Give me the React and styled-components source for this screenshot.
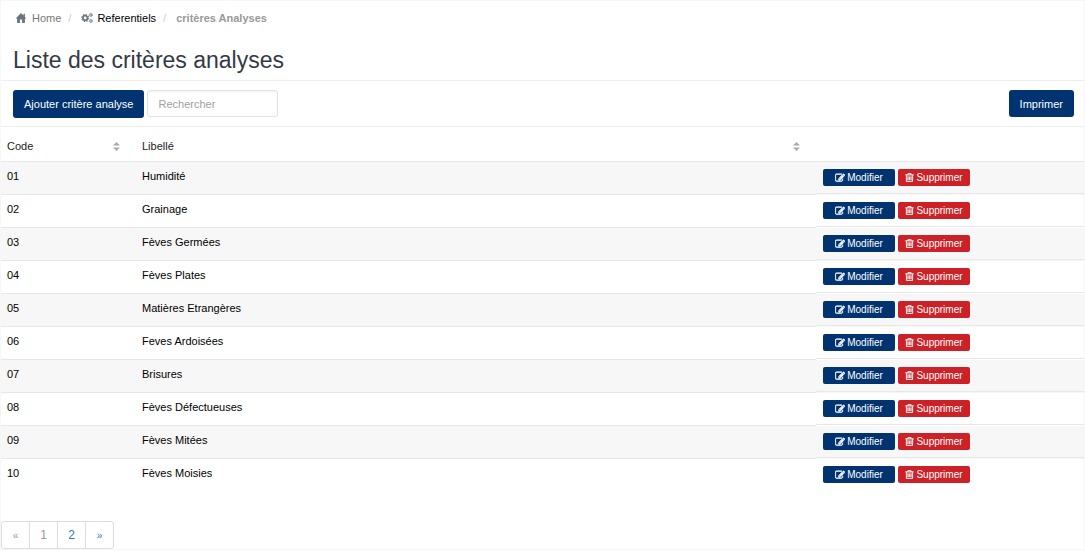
import React, { useState } from 'react';
import styled, { createGlobalStyle } from 'styled-components';

const GlobalStyle = createGlobalStyle`
  * {
    box-sizing: border-box;
  }

  body {
    margin: 0;
    background: white;
    color: #000;
    font-family: "Liberation Sans", Arial, Helvetica, sans-serif;
    font-size: 11px;
    line-height: 16px;
  }

  button, input {
    font-family: inherit;
  }
`;

const Page = styled.main`
  border: 1px solid #f7f7f7;
`;

const Breadcrumb = styled.ol`
  display: flex;
  align-items: center;
  list-style: none;
  margin: 0;
  padding: 9px 14px;
`;

const Crumb = styled.li`
  display: flex;
  align-items: center;
  color: #999;
  font-weight: ${props => (props.$current ? 700 : 400)};

  li + &::before {
    content: '/';
    color: #ccc;
    font-weight: 400;
    padding: 0 10px 0 7px;
  }
`;

const CrumbLink = styled.a`
  display: flex;
  align-items: center;
  gap: ${props => props.$gap || '4px'};
  color: ${props => props.$color || '#000'};
  text-decoration: none;

  svg {
    color: #68747f;
  }
`;

const Title = styled.h1`
  margin: 0;
  padding: 9px 12px 4px;
  color: #333a45;
  font-size: 23px;
  font-weight: 400;
  line-height: 32px;
`;

const Toolbar = styled.div`
  display: flex;
  align-items: flex-start;
  justify-content: space-between;
  padding: 9px 10px 8px 12px;
  border-top: 1px solid #eee;
  border-bottom: 1px solid #eee;
`;

const ToolbarGroup = styled.div`
  display: flex;
  gap: 3px;
`;

const Button = styled.button`
  height: ${props => (props.$compact ? '27px' : '28px')};
  padding: 0 11px;
  border: 0;
  border-radius: 3px;
  background: #00336f;
  color: white;
  font-size: 11px;
  cursor: pointer;
`;

const SearchInput = styled.input`
  width: 131px;
  height: 27px;
  padding: 0 10px;
  border: 1px solid #e2e2e4;
  border-radius: 3px;
  background: white;
  color: #333;
  font-size: 11px;
  box-shadow: inset 0 1px 1px rgba(0, 0, 0, 0.05);

  &::placeholder {
    color: #a0a0a0;
  }
`;

const Table = styled.table`
  width: 100%;
  table-layout: fixed;
  border-collapse: separate;
  border-spacing: 0;
`;

const HeadCell = styled.th`
  width: ${props => props.$width || 'auto'};
  height: 35px;
  padding: 4px 16px 0 6px;
  border-bottom: 1px solid #e7e7e7;
  color: #222;
  font-weight: 400;
  text-align: left;
`;

const SortButton = styled.button`
  display: flex;
  align-items: center;
  justify-content: space-between;
  width: 100%;
  padding: 0;
  border: 0;
  background: none;
  color: inherit;
  font-size: 11px;
  line-height: 16px;
  cursor: pointer;

  svg {
    color: #aaa;
  }
`;

const Row = styled.tr`
  background: ${props => (props.$striped ? '#f7f7f7' : 'white')};
`;

const Cell = styled.td`
  height: 33px;
  padding: 6px 6px 10px;
  border-bottom: 1px solid ${props => (props.$last ? 'transparent' : '#e7e7e7')};
  vertical-align: top;
`;

const ActionCell = styled.td`
  padding: 0;
  vertical-align: top;
`;

const Actions = styled.div`
  display: flex;
  gap: 3px;
  height: 32px;
  padding: 7px;
  border-bottom: 1px solid ${props => (props.$last ? 'transparent' : '#e7e7e7')};
`;

const RowButton = styled.button`
  display: flex;
  align-items: center;
  justify-content: center;
  gap: 2px;
  width: 72px;
  height: 17px;
  padding: 0;
  border: 0;
  border-radius: 2px;
  background: ${props => (props.$danger ? '#cc2127' : '#00336f')};
  color: white;
  font-size: 10px;
  cursor: pointer;
`;

const Pagination = styled.nav`
  display: flex;
  padding: 29px 0 0;
`;

const PageLink = styled.a`
  width: 29px;
  height: 28px;
  margin-right: -1px;
  border: 1px solid #ddd;
  color: ${props => (props.$muted ? '#999' : '#337ab7')};
  font-size: ${props => (props.$arrow ? '10px' : '12px')};
  line-height: 27px;
  text-align: center;
  text-decoration: none;

  &:first-child {
    border-radius: 3px 0 0 3px;
  }

  &:last-child {
    border-radius: 0 3px 3px 0;
  }
`;

const HomeIcon = () => (
  <svg width="12" height="12" viewBox="0 0 12 12" fill="currentColor" aria-hidden="true">
    <path d="M6 1 0.6 6.6h1.5V11h2.8V7.6h2.2V11h2.8V6.600h1.5L9.9 4.9V1.8H8.5v1.700z" />
  </svg>
);

// one large gear with two small ones on its right
const CogsIcon = () => (
  <svg width="12" height="12" viewBox="0 0 12 12" fill="none" stroke="currentColor" aria-hidden="true">
    <circle cx="4.2" cy="6" r="2.300" strokeWidth="1.700" />
    <circle cx="4.2" cy="6" r="3.500" strokeWidth="1.100" strokeDasharray="1.370 1.370" />
    <circle cx="9.900" cy="3" r="1.150" strokeWidth="0.900" />
    <circle cx="9.900" cy="3" r="1.800" strokeWidth="0.600" strokeDasharray="0.940 0.940" />
    <circle cx="9.900" cy="9" r="1.150" strokeWidth="0.900" />
    <circle cx="9.900" cy="9" r="1.800" strokeWidth="0.600" strokeDasharray="0.940 0.940" />
  </svg>
);

const EditIcon = () => (
  <svg width="10" height="10" viewBox="0 0 1792 1792" fill="currentColor" stroke="currentColor" strokeWidth="90" aria-hidden="true">
    <path d="M888 1184l116-116-152-152-116 116v56h96v96h56zm440-720q-16-16-33 1l-350 350q-17 17-1 33t33-1l350-350q17-17 1-33zm80 594v190q0 119-84.500 203.500t-203.500 84.500h-832q-119 0-203.500-84.500t-84.500-203.500v-832q0-119 84.500-203.500t203.500-84.500h832q63 0 117 25 15 7 18 23 3 17-9 29l-49 49q-14 14-32 8-23-6-45-6h-832q-66 0-113 47t-47 113v832q0 66 47 113t113 47h832q66 0 113-47t47-113v-126q0-13 9-22l64-64q15-15 35-7t20 29zm-96-738l288 288-672 672h-288v-288zm444 132l-92 92-288-288 92-92q28-28 68-28t68 28l152 152q28 28 28 68t-28 68z" />
  </svg>
);

const TrashIcon = () => (
  <svg width="9" height="9" viewBox="192 128 1408 1536" fill="currentColor" stroke="currentColor" strokeWidth="50" aria-hidden="true">
    <path d="M704 736v576q0 14-9 23t-23 9h-64q-14 0-23-9t-9-23v-576q0-14 9-23t23-9h64q14 0 23 9t9 23zm256 0v576q0 14-9 23t-23 9h-64q-14 0-23-9t-9-23v-576q0-14 9-23t23-9h64q14 0 23 9t9 23zm256 0v576q0 14-9 23t-23 9h-64q-14 0-23-9t-9-23v-576q0-14 9-23t23-9h64q14 0 23 9t9 23zm128 724v-948h-896v948q0 22 7 40.500t14.500 27 10.500 8.500h832q3 0 10.500-8.500t14.500-27 7-40.500zm-672-1076h448l-48-117q-7-9-17-11h-317q-10 2-17 11zm928 32v64q0 14-9 23t-23 9h-96v948q0 83-47 143.500t-113 60.500h-832q-66 0-113-58.500t-47-141.500v-952h-96q-14 0-23-9t-9-23v-64q0-14 9-23t23-9h309l70-167q15-37 54-63t79-26h320q40 0 79 26t54 63l70 167h309q14 0 23 9t9 23z" />
  </svg>
);

const SortIcon = () => (
  <svg width="7" height="10" viewBox="0 0 7 10" fill="currentColor" aria-hidden="true">
    <path d="M3.500 1l3.500 3.500h-7zM3.500 10l3.500-3.500h-7z" />
  </svg>
);

const criteres = [
  { code: '01', libelle: 'Humidité' },
  { code: '02', libelle: 'Grainage' },
  { code: '03', libelle: 'Fèves Germées' },
  { code: '04', libelle: 'Fèves Plates' },
  { code: '05', libelle: 'Matières Etrangères' },
  { code: '06', libelle: 'Feves Ardoisées' },
  { code: '07', libelle: 'Brisures' },
  { code: '08', libelle: 'Fèves Défectueuses' },
  { code: '09', libelle: 'Fèves Mitées' },
  { code: '10', libelle: 'Fèves Moisies' },
];

const App = () => {
  const [search, setSearch] = useState('');
  const [sort, setSort] = useState({ key: 'code', asc: true });

  const toggleSort = (key) => {
    setSort(prev => ({ key, asc: prev.key === key ? !prev.asc : true }));
  };

  const rows = criteres
    .filter(item => item.libelle.toLowerCase().includes(search.toLowerCase()))
    .sort((a, b) => a[sort.key].localeCompare(b[sort.key]) * (sort.asc ? 1 : -1));

  return (
    <>
      <GlobalStyle />
      <Page>
        <Breadcrumb>
          <Crumb>
            <CrumbLink href="#" $color="#777" $gap="5px"><HomeIcon />Home</CrumbLink>
          </Crumb>
          <Crumb>
            <CrumbLink href="#"><CogsIcon />Referentiels</CrumbLink>
          </Crumb>
          <Crumb $current>critères Analyses</Crumb>
        </Breadcrumb>

        <Title>Liste des critères analyses</Title>

        <Toolbar>
          <ToolbarGroup>
            <Button type="button">Ajouter critère analyse</Button>
            <SearchInput
              type="text"
              placeholder="Rechercher"
              aria-label="Rechercher"
              value={search}
              onChange={e => setSearch(e.target.value)}
            />
          </ToolbarGroup>
          <Button type="button" $compact>Imprimer</Button>
        </Toolbar>

        <Table>
          <thead>
            <tr>
              <HeadCell $width="135px">
                <SortButton type="button" onClick={() => toggleSort('code')}>Code<SortIcon /></SortButton>
              </HeadCell>
              <HeadCell>
                <SortButton type="button" onClick={() => toggleSort('libelle')}>Libellé<SortIcon /></SortButton>
              </HeadCell>
              <HeadCell $width="268px" />
            </tr>
          </thead>
          <tbody>
            {rows.map((item, index) => {
              const last = index === rows.length - 1;
              return (
                <Row key={item.code} $striped={index % 2 === 0}>
                  <Cell $last={last}>{item.code}</Cell>
                  <Cell $last={last}>{item.libelle}</Cell>
                  <ActionCell>
                    <Actions $last={last}>
                      <RowButton type="button"><EditIcon />Modifier</RowButton>
                      <RowButton type="button" $danger><TrashIcon />Supprimer</RowButton>
                    </Actions>
                  </ActionCell>
                </Row>
              );
            })}
          </tbody>
        </Table>

        <Pagination aria-label="Pagination">
          <PageLink href="#" $muted $arrow>«</PageLink>
          <PageLink href="#" $muted>1</PageLink>
          <PageLink href="#">2</PageLink>
          <PageLink href="#" $arrow>»</PageLink>
        </Pagination>
      </Page>
    </>
  );
};

export default App;
